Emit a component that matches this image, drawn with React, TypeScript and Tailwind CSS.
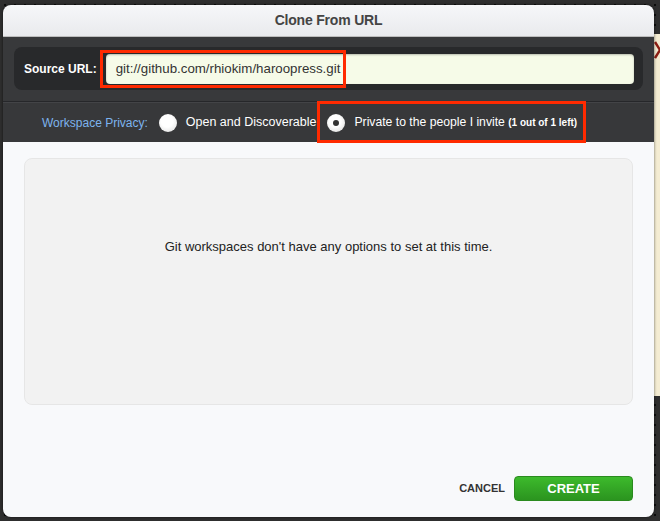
export default function App() {
  return (
    <div
      className="relative w-[660px] h-[521px] overflow-hidden bg-[#2e2e2e] bg-[radial-gradient(circle,#0c0c0c_1px,transparent_1.6px)] bg-[length:10px_10px] pt-[5px] pl-[3px] font-['Liberation_Sans',Arial,sans-serif]"
    >
      {/* window behind the dialog */}
      <div className="absolute left-[650px] top-[34px] w-[20px] h-[362px] bg-[#f4ecd2]">
        <svg className="absolute left-[4px] top-[7px]" width="12" height="18" viewBox="0 0 12 18">
          <path d="M1 1 L11 17 M11 1 L1 17" stroke="#8c1d12" strokeWidth="2.5" fill="none" />
        </svg>
      </div>

      <div className="relative w-[651px] h-[512px] flex flex-col rounded-[8px] overflow-hidden shadow-[0_0_3px_rgba(0,0,0,0.6)]">
        {/* title */}
        <div className="h-[32px] flex items-center justify-center bg-gradient-to-b from-[#f6f7f9] to-[#e9eaed] border-b border-[#bdbdbd]">
          <span className="text-[14px] font-bold text-[#444] tracking-[-0.2px]">Clone From URL</span>
        </div>

        {/* source url */}
        <div className="bg-[#38393b] px-[11px] pt-[10px] pb-[11px] border-b border-[#26272a]">
          <div className="h-[43px] rounded-[8px] bg-[#28292b] flex items-center pl-[10px] pr-[9px] gap-[9px]">
            <span className="text-[12px] font-bold text-white whitespace-nowrap">Source URL:</span>
            <div className="flex-1 h-[30px] rounded-[4px] bg-[#f6fbe8] flex items-center pl-[10px] text-[13.3px] text-[#333] shadow-[inset_0_1px_2px_rgba(0,0,0,0.25)]">
              git://github.com/rhiokim/haroopress.git
            </div>
          </div>
        </div>

        {/* privacy */}
        <div className="h-[40px] bg-[#37383a] border-t border-[#434447] flex items-center pl-[39px] text-[12px]">
          <span className="text-[#7db4ee]">Workspace Privacy:</span>
          <span className="ml-[11px] w-[18px] h-[18px] rounded-full bg-[radial-gradient(circle_at_45%_40%,#ffffff_40%,#d9d9d9_100%)]" />
          <span className="ml-[9px] text-white text-[12.5px]">Open and Discoverable</span>
          <span className="ml-[11px] w-[18px] h-[18px] rounded-full bg-[radial-gradient(circle_at_45%_40%,#ffffff_40%,#d4d4d4_100%)] flex items-center justify-center">
            <span className="w-[6px] h-[6px] rounded-full bg-[#333]" />
          </span>
          <span className="ml-[9px] text-white text-[12.2px]">
            Private to the people I invite <span className="text-[10px] font-bold">(1 out of 1 left)</span>
          </span>
        </div>

        {/* body */}
        <div className="flex-1 bg-[#f8f9fb] px-[21px] pt-[16px] flex flex-col">
          <div className="h-[247px] rounded-[8px] bg-[#f2f2f2] border border-[#e6e6e6] flex items-start justify-center pt-[78px]">
            <p className="text-[13px] text-[#222]">Git workspaces don't have any options to set at this time.</p>
          </div>
          <div className="mt-[71px] flex items-center justify-end gap-[9px]">
            <span className="text-[11px] font-bold text-[#333]">CANCEL</span>
            <button className="w-[119px] h-[25px] rounded-[4px] bg-gradient-to-b from-[#3dba2c] to-[#2b941f] border border-[#2a8a1e] text-white text-[13px] font-bold">
              CREATE
            </button>
          </div>
        </div>
      </div>

      {/* annotation boxes */}
      <div className="absolute left-[100px] top-[50px] w-[246px] h-[38px] border-[3px] border-[#ff2a00]" />
      <div className="absolute left-[317px] top-[101px] w-[269px] h-[42px] border-[3px] border-[#ff2a00]" />
    </div>
  );
}
